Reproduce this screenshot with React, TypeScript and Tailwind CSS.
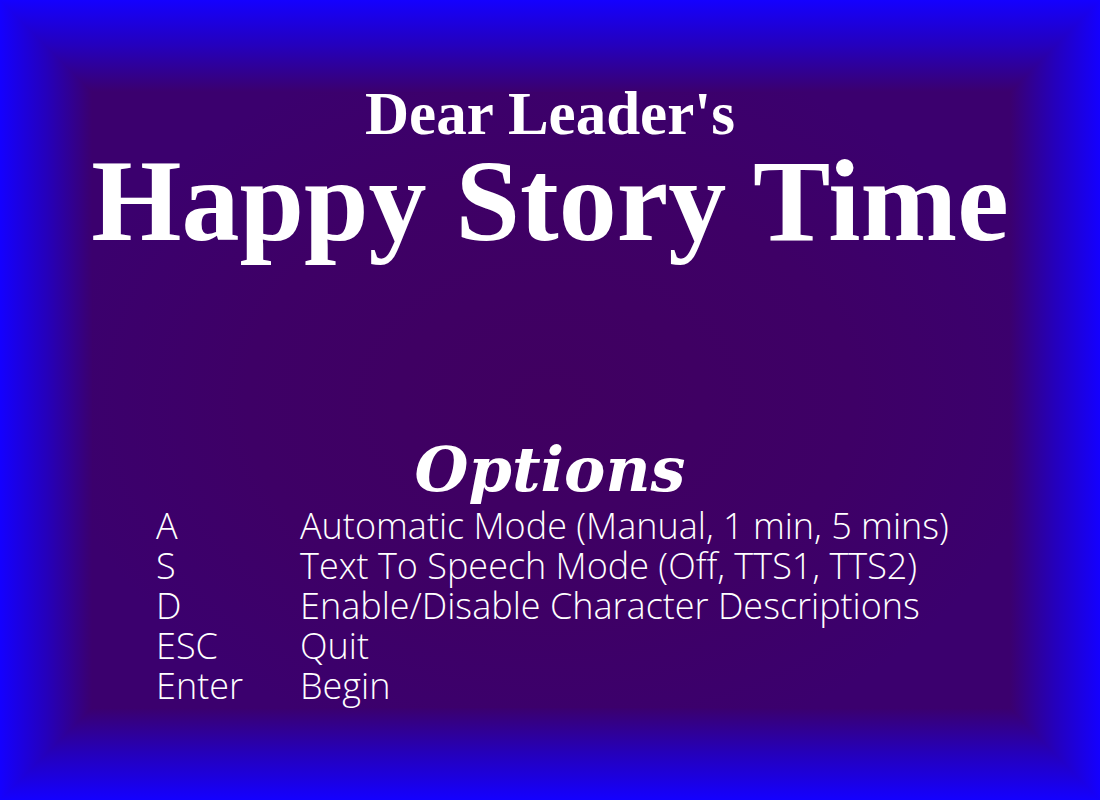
const options = [
  { key: "A", label: "Automatic Mode (Manual, 1 min, 5 mins)" },
  { key: "S", label: "Text To Speech Mode (Off, TTS1, TTS2)" },
  { key: "D", label: "Enable/Disable Character Descriptions" },
  { key: "ESC", label: "Quit" },
  { key: "Enter", label: "Begin" },
];

const edges = [
  { id: "left", x1: 0, y1: 0, x2: 92, y2: 0, points: "0,0 92,0 92,800 0,800" },
  { id: "right", x1: 1100, y1: 0, x2: 1010, y2: 0, points: "1100,0 1010,0 1010,800 1100,800" },
  { id: "top", x1: 0, y1: 0, x2: 0, y2: 92, points: "0,0 1100,0 1010,92 92,92" },
  { id: "bottom", x1: 0, y1: 800, x2: 0, y2: 708, points: "0,800 1100,800 1010,708 92,708" },
];

// Glowing frame whose four sides meet in mitred corners.
function Frame() {
  return (
    <svg
      aria-hidden="true"
      viewBox="0 0 1100 800"
      preserveAspectRatio="none"
      className="pointer-events-none absolute inset-0 -z-10 h-full w-full"
    >
      <defs>
        {edges.map(({ id, x1, y1, x2, y2 }) => (
          <linearGradient key={id} id={`edge-${id}`} gradientUnits="userSpaceOnUse" x1={x1} y1={y1} x2={x2} y2={y2}>
            <stop offset="0" stopColor="#1400ff" />
            <stop offset="0.5" stopColor="#2500bc" />
            <stop offset="1" stopColor="#3b006e" />
          </linearGradient>
        ))}
      </defs>
      {edges.map(({ id, points }) => (
        <polygon key={id} points={points} fill={`url(#edge-${id})`} />
      ))}
    </svg>
  );
}

export default function App() {
  return (
    <main className="relative isolate min-h-screen overflow-hidden bg-[radial-gradient(ellipse_farthest-side_at_center,#400060_0%,#3e0066_55%,#3b006e_90%)] pt-20 pb-20 text-white">
      <Frame />
      <h1 className="text-center font-['Liberation_Serif',serif] font-bold">
        <span className="block text-[61px] leading-[68px]">Dear Leader's</span>
        <span className="block text-[116px] leading-[106px] whitespace-nowrap">Happy Story Time</span>
      </h1>
      <section className="mt-46">
        <h2 className="pb-1 text-center font-['DejaVu_Serif',serif] text-[62px] leading-[64px] font-bold italic">
          Options
        </h2>
        <dl className="grid grid-cols-[144px_auto] pl-39 font-['Open_Sans',sans-serif] text-[36px] leading-[40px] font-light">
          {options.map(({ key, label }) => (
            <div key={key} className="contents">
              <dt>{key}</dt>
              <dd className="whitespace-nowrap">{label}</dd>
            </div>
          ))}
        </dl>
      </section>
    </main>
  );
}
